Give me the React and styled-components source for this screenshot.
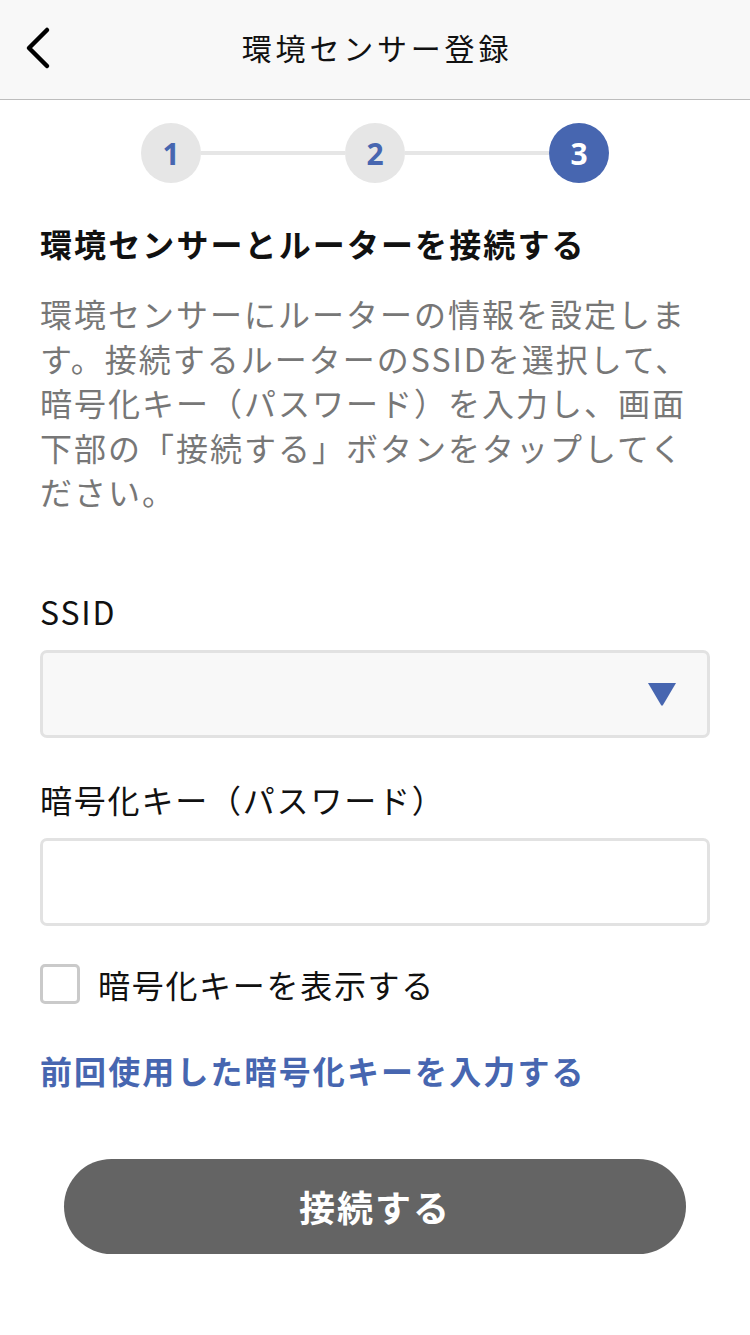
import React from "react";
import styled, { createGlobalStyle } from "styled-components";

const Global = createGlobalStyle`
  html, body { margin: 0; padding: 0; background: #fff; }
  body { font-family: "Noto Sans CJK JP", "Noto Sans", sans-serif; }
  * { box-sizing: border-box; }
`;

const Page = styled.div`
  width: 750px;
  min-height: 1335px;
  background: #fff;
  display: flex;
  flex-direction: column;
`;

const Header = styled.header`
  height: 100px;
  background: #f8f8f8;
  border-bottom: 1px solid #bdbdbd;
  display: flex;
  align-items: center;
  justify-content: center;
  position: relative;
`;

const BackButton = styled.button`
  position: absolute;
  left: 18px;
  top: 22px;
  width: 40px;
  height: 52px;
  border: 0;
  background: transparent;
  padding: 0;
  display: flex;
  align-items: center;
  justify-content: center;
`;

const Title = styled.h1`
  margin: 0;
  font-size: 30px;
  font-weight: 400;
  letter-spacing: 3.8px;
  color: #111;
  line-height: 40px;
  margin-top: -6px;
  padding-left: 4px;
`;

const Stepper = styled.div`
  display: flex;
  align-items: center;
  justify-content: center;
  margin-top: 23px;
`;

const StepCircle = styled.div`
  width: 60px;
  height: 60px;
  border-radius: 50%;
  background: ${(p) => (p.$active ? "#4766b0" : "#e6e6e6")};
  color: ${(p) => (p.$active ? "#fff" : "#4766b0")};
  display: flex;
  align-items: center;
  justify-content: center;
  font-family: "Noto Sans", sans-serif;
  font-weight: 700;
  font-size: 30px;
`;

const StepLine = styled.div`
  width: 144px;
  height: 4px;
  background: #e6e6e6;
`;

const Content = styled.main`
  padding: 0 40px;
  display: flex;
  flex-direction: column;
`;

const Heading = styled.h2`
  margin: 38px 0 0;
  font-size: 32px;
  line-height: 44px;
  font-weight: 700;
  letter-spacing: 2.1px;
  color: #111;
`;

const Description = styled.p`
  margin: 26px 0 0;
  font-size: 32px;
  line-height: 44.5px;
  letter-spacing: 2px;
  color: #777;
`;

const Label = styled.label`
  display: block;
  margin-top: ${(p) => p.$mt}px;
  font-size: 32px;
  line-height: 44px;
  letter-spacing: 1.8px;
  color: #111;
`;

const Field = styled.div`
  margin-top: 17px;
  height: 88px;
  border: 3px solid #e2e2e2;
  border-radius: 7px;
  background: ${(p) => (p.$muted ? "#f8f8f8" : "#fff")};
  display: flex;
  align-items: center;
  justify-content: flex-end;
  padding-right: 30px;
`;

const CheckRow = styled.div`
  margin-top: 36px;
  display: flex;
  align-items: center;
  gap: 18px;
`;

const CheckBox = styled.span`
  width: 40px;
  height: 40px;
  border: 3px solid #cacaca;
  border-radius: 5px;
  background: #fff;
  flex: none;
`;

const CheckLabel = styled.span`
  font-size: 32px;
  line-height: 44px;
  letter-spacing: 1.7px;
  color: #111;
`;

const Link = styled.a`
  margin-top: 42px;
  font-size: 32px;
  line-height: 44px;
  font-weight: 700;
  letter-spacing: 2.1px;
  color: #4766b0;
  text-decoration: none;
`;

const ConnectButton = styled.button`
  margin: 67px 24px 0;
  height: 95px;
  border: 0;
  border-radius: 48px;
  background: #646464;
  color: #fff;
  font-family: "Noto Sans CJK JP", sans-serif;
  font-size: 36px;
  font-weight: 700;
  letter-spacing: 2px;
`;

export default function App() {
  return (
    <Page>
      <Global />
      <Header>
        <BackButton aria-label="戻る">
          <svg width="30" height="44" viewBox="0 0 30 44">
            <path d="M24 4 L6 22 L24 40" fill="none" stroke="#000" strokeWidth="4.5" strokeLinecap="round" strokeLinejoin="round" />
          </svg>
        </BackButton>
        <Title>環境センサー登録</Title>
      </Header>
      <Stepper>
        <StepCircle>1</StepCircle>
        <StepLine />
        <StepCircle>2</StepCircle>
        <StepLine />
        <StepCircle $active>3</StepCircle>
      </Stepper>
      <Content>
        <Heading>環境センサーとルーターを接続する</Heading>
        <Description>
          環境センサーにルーターの情報を設定します。接続するルーターのSSIDを選択して、暗号化キー（パスワード）を入力し、画面下部の「接続する」ボタンをタップしてください。
        </Description>
        <Label $mt={75}>SSID</Label>
        <Field $muted>
          <svg width="30" height="26" viewBox="0 0 30 26">
            <path d="M1 2 L29 2 L16 24 Q15 25.5 14 24 Z" fill="#4766b0" />
          </svg>
        </Field>
        <Label $mt={39}>暗号化キー（パスワード）</Label>
        <Field />
        <CheckRow>
          <CheckBox />
          <CheckLabel>暗号化キーを表示する</CheckLabel>
        </CheckRow>
        <Link href="#">前回使用した暗号化キーを入力する</Link>
        <ConnectButton>接続する</ConnectButton>
      </Content>
    </Page>
  );
}
